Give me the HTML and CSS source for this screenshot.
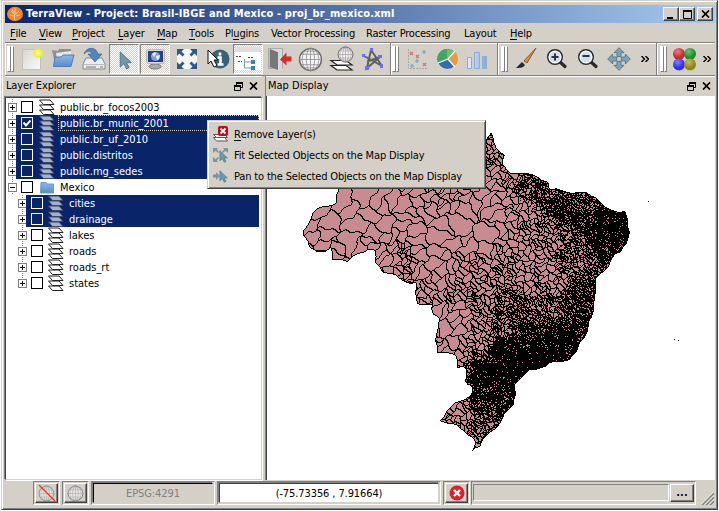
FILE: index.html
```html
<!DOCTYPE html>
<html lang="en">
<head>
<meta charset="utf-8">
<title>TerraView</title>
<link rel="stylesheet" href="styles.css">
</head>
<body>
<svg class="defs" width="0" height="0">
  <defs>
    <linearGradient id="paper" x1="0" y1="0" x2="1" y2="1"><stop offset="0" stop-color="#d5d5d0"/><stop offset="1" stop-color="#fafafa"/></linearGradient>
    <linearGradient id="blue" x1="0" y1="0" x2="0" y2="1"><stop offset="0" stop-color="#91b8e2"/><stop offset="1" stop-color="#5a8cc8"/></linearGradient>
    <linearGradient id="bar" x1="0" y1="0" x2="1" y2="0"><stop offset="0" stop-color="#e2eefa"/><stop offset="1" stop-color="#84a9d8"/></linearGradient>
    <radialGradient id="glow"><stop offset="0" stop-color="#fffde0"/><stop offset=".35" stop-color="#fff36b"/><stop offset=".7" stop-color="#f5ee20"/><stop offset="1" stop-color="#f5ee20" stop-opacity="0"/></radialGradient>
    <radialGradient id="red" cx=".4" cy=".3"><stop offset="0" stop-color="#f08080"/><stop offset="1" stop-color="#c52a32"/></radialGradient>
    <radialGradient id="green" cx=".4" cy=".3"><stop offset="0" stop-color="#6fc46f"/><stop offset="1" stop-color="#1e8c28"/></radialGradient>
    <radialGradient id="indigo" cx=".4" cy=".3"><stop offset="0" stop-color="#8080ff"/><stop offset="1" stop-color="#2d2dfa"/></radialGradient>
    <radialGradient id="olive" cx=".4" cy=".3"><stop offset="0" stop-color="#c6bd65"/><stop offset="1" stop-color="#918516"/></radialGradient>
    <symbol id="layers" viewBox="0 0 18 16">
      <path d="M1.500 11H12l4 4.500H5.500z"/><path d="M1.500 6H12l4 4.500H5.500z"/><path d="M1.500 1H12l4 4.500H5.500z"/>
    </symbol>
    <symbol id="globe" viewBox="0 0 24 24">
      <circle cx="12" cy="12" r="10.500" fill="#f2f2f2" stroke="#666" stroke-width="1.300"/>
      <g fill="none" stroke="#888" stroke-width=".7"><path d="M12 1v22M1 12h22M2.500 7h19M2.500 17h19M5 4h14M5 20h14"/><ellipse cx="12" cy="12" rx="4" ry="11"/><ellipse cx="12" cy="12" rx="8" ry="11"/></g>
    </symbol>
    <symbol id="cursor" viewBox="0 0 12 18"><path d="M1 1v14l3.500-3 2.500 5 2.500-1.300-2.500-4.700H11.500z" fill="#6e98ae" stroke="#4b6d82" stroke-width=".8"/></symbol>
    <symbol id="lens" viewBox="0 0 22 22"><path d="M14 14l5 4.500" stroke="#292929" stroke-width="3.200" stroke-linecap="round"/><circle cx="9" cy="9" r="7.300" fill="#cfe0f4" stroke="#292929" stroke-width="1.400"/><circle cx="9" cy="9" r="5.800" fill="none" stroke="#fff"/></symbol>
    <symbol id="restore" viewBox="0 0 9 9"><path d="M2.500 3V.5h6v5H7M.5 3.500h6v5h-6z" fill="none" stroke="#000"/><path d="M2 1h7M0 4h7" stroke="#000" stroke-width="2"/></symbol>
    <symbol id="cross" viewBox="0 0 9 8"><path d="M1 .5l7 7M8 .5l-7 7" stroke="#000" stroke-width="1.700"/></symbol>
    <symbol id="arrow4" viewBox="0 0 24 24"><path d="M12 .7l5 5h-3v4h-4v-4H7zM23.300 12l-5 5v-3h-4v-4h4V7zM12 23.300l-5-5h3v-4h4v4h3zM.7 12l5-5v3h4v4h-4v3z" fill="#7fa3b5" stroke="#527488" stroke-width=".9"/></symbol>
  </defs>
</svg>
<div class="window">
  <header class="titlebar">
    <svg class="app-icon" viewBox="0 0 16 16"><ellipse cx="8" cy="8" rx="8" ry="7.200" fill="#ed8829"/><path d="M7.500 14V8L4 5M7.500 9L12 5M8 8V2M3 9l4 1M9 10l4-1M5 3l2 4" stroke="#f8c998" fill="none" stroke-width=".9"/></svg>
    <span class="title">TerraView - Project: Brasil-IBGE and Mexico - proj_br_mexico.xml</span>
    <div class="caption">
      <i class="cap"><svg width="9" height="9"><path d="M0 8h6" stroke="#000" stroke-width="2"/></svg></i>
      <i class="cap"><svg width="9" height="9"><path d="M.5 1v7.500h8V1" fill="none" stroke="#000"/><path d="M0 1h9" stroke="#000" stroke-width="2"/></svg></i>
      <i class="cap cap-close"><svg width="9" height="8"><use href="#cross"/></svg></i>
    </div>
  </header>
  <nav class="menubar">
    <span class="m-file"><u>F</u>ile</span><span class="m-view"><u>V</u>iew</span><span class="m-project"><u>P</u>roject</span><span class="m-layer"><u>L</u>ayer</span><span class="m-map"><u>M</u>ap</span><span class="m-tools"><u>T</u>ools</span><span class="m-plugins">Pl<u>u</u>gins</span><span class="m-vector">Vector Processing</span><span class="m-raster">Raster Processing</span><span class="m-layout">Layout</span><span class="m-help"><u>H</u>elp</span>
  </nav>
  <div class="toolbars">
    <div class="toolbar tb-main">
      <i class="grip"></i>
      <b class="tool"><svg width="24" height="24"><path d="M2.500 2.500h18v20h-18z" fill="url(#paper)" stroke="#c2c0b9"/><circle cx="18" cy="6" r="5.500" fill="url(#glow)"/></svg></b>
      <b class="tool"><svg width="24" height="24"><path d="M1 3l6 1 1-2h12v15H4z" fill="#8f918f"/><path d="M5 6l15-2v9H6z" fill="#e6e9e9"/><path d="M4 10h6l2-2h11l-3 11.500H2.500z" fill="url(#blue)" stroke="#4b7fb8"/></svg></b>
      <b class="tool"><svg width="24" height="24"><path d="M4 11h16l3 6v5H1v-5z" fill="#ececec" stroke="#888"/><path d="M2 17.500h20" stroke="#bbb"/><path d="M4 20h10M18 20h3" stroke="#777"/><path d="M2 7C4 0 14-1 16 7h4l-7 8-7-8h4C9 4 6 3 2 7z" fill="#5384bb" stroke="#376a9f" stroke-width=".7"/></svg></b>
      <b class="tool down"><svg class="pointer" width="13" height="19"><use href="#cursor"/></svg></b>
      <b class="tool down"><svg width="24" height="24"><ellipse cx="12" cy="19.500" rx="6" ry="2.500" fill="#aaa" stroke="#777"/><rect x="3.500" y="2.500" width="18" height="14" rx="1" fill="#d7d9df" stroke="#bbb"/><rect x="5.500" y="4.500" width="14" height="10" fill="#27448c" stroke="#243c78"/><circle cx="12.500" cy="9.500" r="4.500" fill="#829fe0"/><path d="M9 7l3-2 1 2-2 3zM13 9l4-1-1 4-2 1z" fill="#e7f1ff"/></svg></b>
      <b class="tool"><svg width="24" height="24"><rect x="2" y="2" width="20" height="20" fill="#f4f6f6"/><path d="M2 2h7L6.500 4.500l3 3-2 2-3-3L2 9zM22 2h-7l2.500 2.500-3 3 2 2 3-3L22 9zM2 22h7l-2.500-2.500 3-3-2-2-3 3L2 15zM22 22h-7l2.500-2.500-3-3 2-2 3 3L22 15z" fill="#2c588c"/></svg></b>
      <b class="tool"><svg width="26" height="24"><circle cx="15" cy="12" r="9.500" fill="#396179"/><path d="M15 5.500v3M12.500 10.500h3v6.500M12.500 17.500h6" fill="none" stroke="#fff" stroke-width="2.600"/><path d="M3 3v14l3-3 3 6 3-1.500-3-5.500h4z" fill="#fff" stroke="#111"/></svg></b>
      <b class="tool down"><svg width="26" height="26"><path d="M0 1h26v23H0z" fill="#fff"/><path d="M0 1h26v5H0z" fill="#dedede"/><path d="M9.500 13v9h7M9.500 16h7" fill="none" stroke="#7898bc"/><path d="M1 10.500h6M3 15.500h4M13 11.500h5" stroke="#444" stroke-dasharray="2 1"/><path d="M16 14h4v4h-4zM16 20h4v4h-4z" fill="#2f82ca"/></svg></b>
      <b class="tool"><svg width="26" height="24"><path d="M1.500 1.500h14v20h-14z" fill="#bbb" stroke="#aaa"/><path d="M3 2l8 3v18l-8-3z" fill="#777"/><path d="M11 5v18h4V2H3z" fill="#d9d9d9"/><path d="M24.500 9.500h-5v-4L13 12.500l6.500 6v-4h5z" fill="#d32c2c"/></svg></b>
      <b class="tool"><svg width="25" height="25"><use href="#globe"/></svg></b>
      <b class="tool"><svg width="26" height="26"><g fill="#fff" stroke="#222" stroke-width="1.200"><path d="M2 19.500h15l6 4.500H8z"/><path d="M2 14.500h15l6 4.500H8z"/></g><use href="#globe" x="8" y="0" width="17" height="17"/></svg></b>
      <b class="tool"><svg width="24" height="24"><path d="M10 3L6 21 19 10 6 14.500M3 9l18 10-11-16" fill="none" stroke="#606060" stroke-width="2"/><path d="M9 1h3v3H9zM1 7h3v3H1zM17 8h4v3h-4zM4 19h4v4H4zM19 17h3v4h-3z" fill="#6d6df0"/></svg></b>
    </div>
    <div class="toolbar tb-charts">
      <i class="grip"></i>
      <b class="tool"><svg width="24" height="24"><path d="M3.500 2v19.500H23" fill="none" stroke="#aaa" stroke-dasharray="2 1"/><path d="M5 5l3 3M8 5L5 8M11 8l3 3M14 8l-3 3M18 16l3 3M21 16l-3 3" stroke="#cf7777" stroke-width="1.300"/><path d="M12 12v4M10 14h4M7 17v4M5 19h4M19 3v4M17 5h4" stroke="#779dd3" stroke-width="1.200"/></svg></b>
      <b class="tool"><svg width="24" height="24"><circle cx="11.500" cy="12" r="10" fill="#326ea8"/><path d="M11 12V2A10 10 0 0 0 2 16z" fill="#41a565"/><path d="M11 2l7 2-7 8z" fill="#75c06c"/><path d="M13 12l6-8a11 11 0 0 1 0 15z" fill="#eb9a42"/><path d="M12 12l7-8M12 12l7 8M12 12L2 16" stroke="#fff" stroke-width="1.300"/></svg></b>
      <b class="tool"><svg width="26" height="24"><path d="M2.500 2v20H25" stroke="#ccc" fill="none"/><g fill="url(#bar)" stroke="#8bacd8"><path d="M4.500 10.500h4v11h-4zM11.500 5.500h5v16h-5zM19.500 9.500h4v12h-4z"/></g></svg></b>
    </div>
    <div class="toolbar tb-nav">
      <i class="grip"></i>
      <b class="tool"><svg width="24" height="24"><path d="M10 14L22 1l-9 15z" fill="#dc8f48" stroke="#8b552a"/><path d="M7 14l4 3-3 2-4-1z" fill="#ccc"/><path d="M2 21l6-6 3 3c-2 3-5 3-9 3z" fill="#252a31"/></svg></b>
      <b class="tool"><svg width="22" height="22"><use href="#lens"/><path d="M5.500 9h7M9 5.500v7" stroke="#333" stroke-width="2"/></svg></b>
      <b class="tool"><svg width="22" height="22"><use href="#lens"/><path d="M5.500 8h7" stroke="#333" stroke-width="2"/></svg></b>
      <b class="tool"><svg width="24" height="24"><use href="#arrow4"/></svg></b>
      <svg class="more" width="8" height="6"><path d="M.5 0l3 3-3 3M4.500 0l3 3-3 3" fill="none" stroke="#000" stroke-width="1.400"/></svg>
    </div>
    <div class="toolbar tb-plug">
      <i class="grip"></i>
      <b class="tool"><svg width="25" height="25"><circle cx="7" cy="7" r="6" fill="url(#red)"/><circle cx="18" cy="7" r="6" fill="url(#green)"/><circle cx="7" cy="17.500" r="6" fill="url(#indigo)"/><circle cx="18" cy="17.500" r="6" fill="url(#olive)"/></svg></b>
      <svg class="more" width="8" height="6"><path d="M.5 0l3 3-3 3M4.500 0l3 3-3 3" fill="none" stroke="#000" stroke-width="1.400"/></svg>
    </div>
  </div>
  <main class="docks">
    <section class="dock explorer">
      <div class="dock-title"><span class="t-explorer">Layer Explorer</span><svg width="9" height="9"><use href="#restore"/></svg><svg width="9" height="8"><use href="#cross"/></svg></div>
      <ul class="tree" id="tree"></ul>
    </section>
    <section class="dock display">
      <div class="dock-title"><span class="t-display">Map Display</span><svg width="9" height="9"><use href="#restore"/></svg><svg width="9" height="8"><use href="#cross"/></svg></div>
      <div class="map-view"><canvas id="map" width="446" height="384"></canvas></div>
    </section>
  </main>
  <footer class="status">
    <i class="sbtn-frame"><i class="sbtn"><svg width="17" height="17" opacity=".65"><use href="#globe"/></svg><svg class="strike" width="18" height="18"><path d="M1 1l16 16" stroke="#e33" stroke-width="1.200"/></svg></i></i>
    <i class="sbtn-frame"><i class="sbtn"><svg width="17" height="17" opacity=".75"><use href="#globe"/></svg></i></i>
    <div class="field-frame epsg"><div class="field"><span>EPSG:4291</span></div></div>
    <div class="field-frame coord"><div class="field"><span>(-75.73356 , 7.91664)</span></div></div>
    <i class="sbtn-frame stop"><i class="sbtn"><svg width="16" height="16"><circle cx="8" cy="8" r="7.500" fill="#d8232b"/><path d="M5 5l6 6M11 5l-6 6" stroke="#fff" stroke-width="2.400"/></svg></i></i>
    <div class="progress-frame"><div class="progress"></div><i class="dots">...</i></div>
    <svg class="sizegrip" width="13" height="13"><path d="M1 13L13 1M5 13l8-8M9 13l4-4" stroke="#808080" stroke-width="1.700"/><path d="M0 12.500L12.500 0M4 12.500L12.500 4M8 12.500L12.500 8" stroke="#fff" stroke-width=".8"/></svg>
  </footer>
</div>
<div class="context">
  <div class="item"><svg width="18" height="18"><g fill="#fff" stroke="#555"><path d="M1.500 12.500h11l3 3.500h-11z"/><path d="M1.500 9.500h11l3 3h-11z"/></g><rect x="6" y="1" width="10" height="10" rx="2" fill="#b50f18"/><path d="M8.500 3.500l5 5M13.500 3.500l-5 5" stroke="#fff" stroke-width="1.800"/></svg><span class="c-remove"><u>R</u>emove Layer(s)</span></div>
  <div class="item"><svg width="18" height="18"><path d="M1 2h5L4.800 3.500 7 6 6 7 3.500 4.800 1 7zM16 2h-5l1.200 1.500L10 6l1 1 2.500-2.200L16 7zM1 16h5l-1.200-1.500L7 12l-1-1-2.500 2.200L1 11z" fill="#7895a4"/><use href="#cursor" x="7" y="4" width="9" height="13"/></svg><span class="c-fit">Fit Selected Objects on the Map Display</span></div>
  <div class="item"><svg width="18" height="18"><path d="M1 7.500h3V5l4 4-4 4v-2.500H1z" fill="#7895a4"/><use href="#cursor" x="7" y="3" width="9" height="13"/></svg><span class="c-pan">Pan to the Selected Objects on the Map Display</span></div>
</div>
<script src="app.js"></script>
</body>
</html>
```
FILE: styles.css
```css
* { box-sizing: border-box; }
body { margin: 0; width: 719px; height: 511px; overflow: hidden; background: #fff; font: 11px/14px "DejaVu Sans Condensed", "DejaVu Sans", sans-serif; color: #000; }
.defs { position: absolute; }
i, b { font-style: normal; font-weight: normal; }
svg { display: block; flex: none; }
u { text-decoration: none; border-bottom: 1px solid #000; display: inline-block; height: 13px; }
span { white-space: pre; }

.window { display: flex; flex-direction: column; width: 717px; height: 510px; margin-left: 1px; background: #d4d0c8; border: 1px solid #d4d0c8; border-right-color: #404040; border-bottom-color: #404040; box-shadow: inset 1px 1px #fff, inset -1px -1px #808080; padding: 4px 2px 3px 3px; }

.titlebar { display: flex; align-items: center; height: 18px; background: linear-gradient(90deg, #0a246a, #a6caf0); color: #fff; padding: 0 2px; }
.app-icon { width: 16px; height: 16px; margin-right: 3px; }
.title { flex: 1; font-weight: bold; letter-spacing: .13px; }
.caption { display: flex; }
.cap { width: 16px; height: 14px; background: #d4d0c8; border: 1px solid; border-color: #fff #404040 #404040 #fff; box-shadow: inset -1px -1px #808080; display: flex; padding: 2px 0 0 3px; }
.cap-close { margin-left: 2px; }

.menubar { display: flex; height: 19px; padding: 4px 0 0 5px; letter-spacing: -.2px; }
.menubar span { flex: none; }
.m-file { width: 29px; } .m-view { width: 33px; } .m-project { width: 46px; } .m-layer { width: 39px; } .m-map { width: 32px; } .m-tools { width: 36px; } .m-plugins { width: 46px; } .m-vector { width: 95px; } .m-raster { width: 98px; } .m-layout { width: 46px; }
.m-vector, .m-raster { letter-spacing: -.2px; }

.toolbars { display: flex; height: 34px; border-top: 1px solid #808080; box-shadow: inset 0 1px #fff; border-bottom: 1px solid #808080; }
.toolbar { display: flex; align-items: center; border-right: 1px solid #808080; box-shadow: inset 1px 1px #fff; padding-left: 2px; height: 32px; flex: none; }
.tb-main { width: 386px; } .tb-charts { width: 107px; padding-left: 1px; } .tb-nav { width: 159px; padding-left: 3px; } .tb-plug { width: 57px; border-right: 0; padding-left: 3px; }
.grip { display: flex; width: 7px; height: 26px; margin-right: 2px; flex: none; justify-content: space-between; }
.grip::before, .grip::after { content: ""; width: 3px; border: 1px solid; border-color: #fff #808080 #808080 #fff; background: #fff; }
.tool { width: 31px; height: 30px; display: flex; align-items: center; justify-content: center; flex: none; }
.tb-charts .tool:last-child { width: 28px; overflow: hidden; justify-content: flex-start; }
.down { width: 30px; margin-right: 1px; background: repeating-conic-gradient(#fff 0 25%, #d4d0c8 0 50%) 0 0 / 2px 2px; border: 1px solid; border-color: #808080 #fff #fff #808080; }
.pointer { margin: 3px 0 0 3px; }
.more { margin: 0 auto; }

.docks { display: flex; height: 404px; }
.dock { display: flex; flex-direction: column; }
.explorer { width: 257px; margin-right: 3px; }
.display { flex: 1; border-left: 1px solid #808080; }
.dock-title { display: flex; align-items: center; height: 21px; gap: 6px; padding: 0 4px 2px 1px; flex: none; border-top: 1px solid #fff; }
.dock-title span { flex: 1; }
.t-explorer { letter-spacing: -.15px; }
.display .dock-title { height: 20px; padding: 0 4px 1px 2px; }
.map-view { border-left: 1px solid #404040; background: #fff; height: 384px; overflow: hidden; }
#map { display: block; }
.tree { list-style: none; margin: 0; padding: 1px 2px 0 1px; height: 383px; background: #fff; border: 1px solid; border-color: #404040 #d4d0c8 #d4d0c8 #404040; box-shadow: -1px -1px #808080, 1px 1px #fff; }
.row { display: flex; height: 16px; align-items: center; background: repeating-linear-gradient(#808080 0 1px, transparent 0 2px) 5px 0 / 1px 100% no-repeat; }
.child { padding-left: 10px; background-position: 15px 0; }
.row:last-child { background-size: 1px 8px; }
.exp { width: 9px; height: 9px; border: 1px solid #808080; background: #fff; margin-left: 1px; display: flex; flex: none; }
.content { display: flex; align-items: center; height: 16px; flex: 1; padding-left: 4px; margin-left: -1px; }
.content .check { margin-left: 1px; }
.check { width: 12px; height: 12px; border: 1px solid #000; flex: none; margin-right: 5px; }
.icon { margin-right: 2px; fill: #fff; stroke: #222; }
.child .icon { margin-left: -1px; }
.name { flex: 1; height: 16px; padding: 1px 0 0 2px; border: 1px solid transparent; border-left: 0; line-height: 13px; }
.sel .content { background: #0a246a; color: #fff; }
.sel .check { border-color: #fff; }
.sel .icon { fill: #a4b2d0; stroke: #3a4766; }
.focus .name { border: 1px dotted #d8cf9c; padding-left: 1px; }

.status { display: flex; align-items: center; height: 24px; margin-top: 1px; padding-left: 28px; }
.sbtn-frame { width: 27px; height: 24px; border: 1px solid; border-color: #808080 #fff #fff #808080; margin-right: 2px; padding: 1px; flex: none; }
.sbtn { position: relative; display: flex; align-items: center; justify-content: center; width: 23px; height: 20px; border: 1px solid; border-color: #fff #404040 #404040 #fff; box-shadow: inset -1px -1px #808080; }
.strike { position: absolute; left: 2px; top: 0; }
.field-frame { height: 24px; border: 1px solid; border-color: #808080 #fff #fff #808080; padding: 1px; flex: none; }
.field { height: 20px; border: 1px solid; border-color: #404040 #d4d0c8 #d4d0c8 #404040; box-shadow: -1px -1px #808080; display: flex; align-items: center; justify-content: center; padding-top: 1px; }
.epsg { width: 124px; margin-right: 2px; letter-spacing: -.1px; } .epsg .field { color: #808080; border-top-color: #000; border-left-color: #000; }
.coord { width: 224px; margin-right: 2px; letter-spacing: -.1px; } .coord .field { background: #fff; }
.progress-frame { display: flex; width: 225px; height: 24px; border: 1px solid; border-color: #808080 #fff #fff #808080; padding: 2px 1px; }
.stop { margin-right: 1px; }
.progress { flex: 1; height: 17px; border: 1px solid; border-color: #808080 #fff #fff #808080; margin-right: 1px; }
.dots { width: 24px; height: 18px; border: 1px solid; border-color: #fff #404040 #404040 #fff; box-shadow: inset -1px -1px #808080; text-align: center; line-height: 16px; font-weight: bold; color: #103; }
.sizegrip { margin: auto 1px 0 auto; }

.context { position: absolute; left: 207px; top: 120px; width: 279px; height: 69px; background: #d4d0c8; border: 1px solid; border-color: #d4d0c8 #404040 #404040 #d4d0c8; box-shadow: inset 1px 1px #fff, inset -1px -1px #808080; padding: 3px 4px; letter-spacing: -.16px; }
.item { display: flex; align-items: center; height: 21px; gap: 4px; }
.item svg { margin-top: -2px; }
```
FILE: app.js
```js
// Layer tree: [name, depth, selected, checked, folder]
const layers = [
  ["public.br_focos2003", 0, 0], ["public.br_munic_2001", 0, 1, 1],
  ["public.br_uf_2010", 0, 1], ["public.distritos", 0, 1], ["public.mg_sedes", 0, 1],
  ["Mexico", 0, 0, 0, 1], ["cities", 1, 1], ["drainage", 1, 1],
  ["lakes", 1, 0], ["roads", 1, 0], ["roads_rt", 1, 0], ["states", 1, 0]
];
document.getElementById("tree").innerHTML = layers.map(([name, depth, sel, checked, folder]) =>
  `<li class="row${depth ? " child" : ""}${sel ? " sel" : ""}${checked ? " focus" : ""}">
    <i class="exp"><svg width="7" height="7"><path d="M1 3.500h5${folder ? "" : "M3.500 1v5"}" stroke="#000"/></svg></i>
    <div class="content"><i class="check">${checked ? '<svg width="10" height="10"><path d="M1.500 4.500l2.500 3 4.500-5" fill="none" stroke="#fff" stroke-width="2"/></svg>' : ""}</i>
    ${folder ? '<svg class="icon" width="18" height="16"><path d="M3 3.500h5l1 1.500h6.500v9H2.500z" fill="url(#blue)" stroke="#6799cb"/></svg>' : '<svg class="icon" width="18" height="16"><use href="#layers"/></svg>'}
    <span class="name">${name}</span></div></li>`).join("");

// Municipality map: a pixel-level cell partition inside the country outline.
const outline = [[339,188],[339,150],[370,150],[400,140],[440,150],[470,160],[485,143],[488,136],[491,132],[494,142],[499,151],[505,155],[503,165],[506,169],[515,173],[525,173],[538,177],[548,182],[549,188],[556,188],[572,193],[586,192],[597,198],[604,206],[612,210],[625,211],[628,220],[630,232],[627,243],[621,252],[612,259],[605,271],[596,278],[595,298],[594,310],[589,322],[588,331],[580,342],[577,352],[570,360],[555,362],[545,367],[530,370],[520,379],[515,384],[516,395],[514,404],[505,413],[497,428],[484,438],[480,447],[472,451],[475,444],[473,438],[462,430],[452,424],[440,421],[446,412],[456,402],[471,395],[471,386],[465,381],[466,369],[457,368],[455,355],[437,353],[435,340],[439,318],[433,315],[432,305],[417,304],[416,283],[405,282],[395,275],[383,273],[375,263],[375,251],[368,250],[358,254],[347,262],[332,260],[331,247],[325,252],[317,252],[309,247],[306,239],[303,231],[309,222],[312,213],[323,206],[336,203]];
// Typical cell size around control points: [x, y, size]
const sizes = [[320,215,30],[340,230,20],[350,205,22],[375,215,20],[340,245,15],[365,235,18],[395,210,17],[430,215,22],[425,235,22],[400,247,5],[385,260,9],[470,225,30],[485,220,26],[450,200,10],[470,190,12],[405,262,5],[425,270,11],[450,260,9],[430,290,8],[445,295,6],[470,270,6],[448,322,24],[440,345,13],[465,330,6.5],[475,300,5.5],[480,345,5],[500,205,9],[490,150,5],[510,240,5.500],[540,240,5],[520,190,4],[545,195,3.200],[570,215,3.200],[600,235,2.500],[620,230,2],[575,250,4],[540,275,6.500],[520,270,5.500],[510,300,4],[545,310,4],[585,300,3],[570,330,2.500],[550,350,2],[500,350,2],[485,370,2],[500,390,2.400],[480,400,2.800],[460,415,5.500],[480,430,4],[500,325,4],[535,330,2.800],[525,360,1.800],[490,320,4.500]];
let seed = 7;
const rnd = () => ((seed = (seed * 1664525 + 1013904223) >>> 0) / 4294967296);
const sizeAt = (x, y) => {
  let n = 0, d = 0;
  for (const [a, b, s] of sizes) { const w = 1 / Math.pow((x - a) ** 2 + (y - b) ** 2 + 20, 2); n += w * s; d += w; }
  return n / d;
};
const canvas = document.getElementById("map"), ctx = canvas.getContext("2d");
const box = canvas.getBoundingClientRect(), OX = Math.round(box.left), OY = Math.round(box.top);
const W = 446, H = 384, dist = new Float32Array(W * H).fill(1e9), id = new Int32Array(W * H);
const path = new Path2D();
outline.forEach(([x, y], i) => {
  const [px, py] = outline[(i + 1) % outline.length];
  path.lineTo(x - OX, y - OY);
  path.lineTo((x + px) / 2 - OX + (rnd() - .5) * 3, (y + py) / 2 - OY + (rnd() - .5) * 3);
});
path.closePath();
for (let i = 1; i < 45000; i++) {
  const x = 295 + rnd() * 340, y = 130 + rnd() * 325, s = sizeAt(x, y);
  if (rnd() > 2.700 / (s * s)) continue;
  const cx = x - OX, cy = y - OY, r = Math.ceil(s * 3 + 4), t = (s > 9 ? 2 : 0) + rnd() * (s > 9 ? 1.3 : 3.14), c = Math.cos(t), n = Math.sin(t), k = .45 + rnd() * .5;
  for (let v = Math.max(0, cy - r | 0); v < Math.min(H, cy + r); v++)
    for (let u = Math.max(0, cx - r | 0); u < Math.min(W, cx + r); u++) {
      const a = u + Math.sin(v * .45) * 1.300 - cx, b = v + Math.sin(u * .5) * 1.300 - cy, p = a * c + b * n, q = b * c - a * n, e = p * p * k + q * q / k;
      if (e < dist[v * W + u]) { dist[v * W + u] = e; id[v * W + u] = i; }
    }
}
const img = ctx.createImageData(W, H);
const inside = new Uint8Array(W * H);
for (let v = 0; v < H; v++) for (let u = 0; u < W; u++) inside[v * W + u] = ctx.isPointInPath(path, u + .5, v + .5) ? 1 : 0;
for (let v = 1; v < H - 1; v++) for (let u = 1; u < W - 1; u++) {
  const p = v * W + u;
  if (!inside[p]) continue;
  const s = sizeAt(u + OX, v + OY);
  const dense = rnd() < Math.min(.78, Math.max(0, (4.800 - s) * .24));
  const edge = dense || id[p] !== id[p + 1] || id[p] !== id[p + W] || !inside[p - 1] || !inside[p + 1] || !inside[p - W] || !inside[p + W];
  const rgb = edge ? [0, 0, 0] : [200, 139, 145];
  img.data.set([...rgb, 255], p * 4);
}
ctx.putImageData(img, 0, 0);
[[648, 201], [674, 339], [678, 340]].forEach(([x, y]) => ctx.fillRect(x - OX, y - OY, 1, 1));
```
